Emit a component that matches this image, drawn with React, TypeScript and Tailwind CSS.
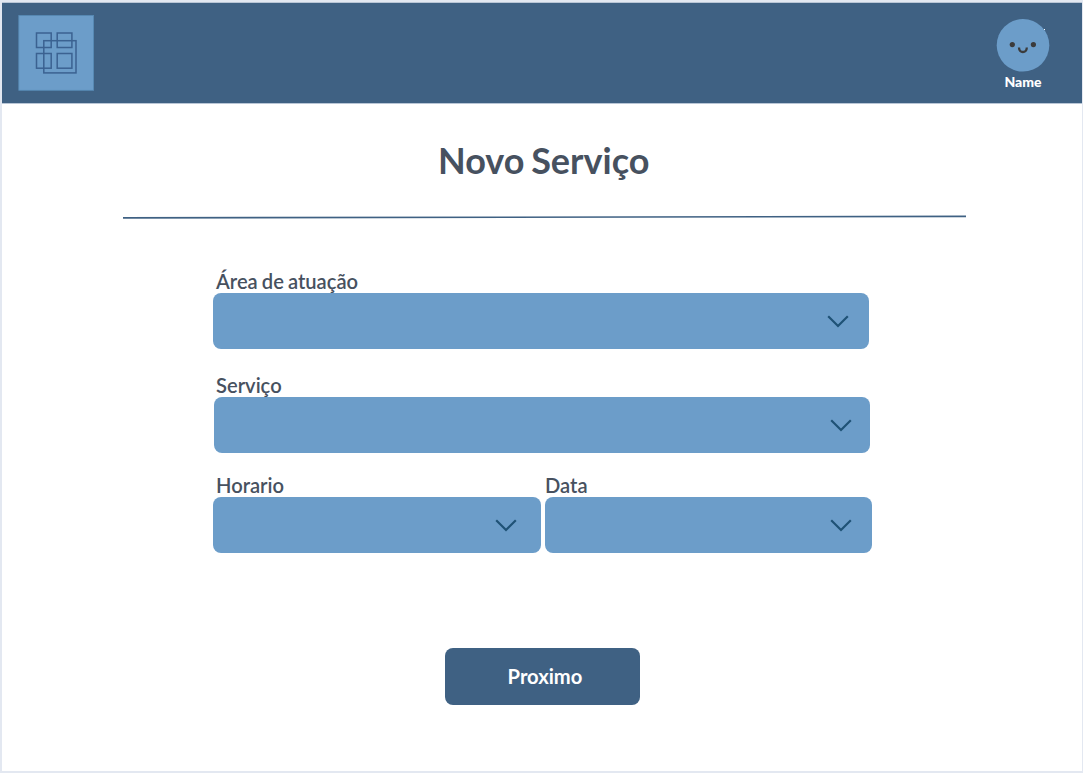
import React from "react";

function Chevron({ className = "" }: { className?: string }) {
  return (
    <svg className={`h-[13px] w-[22px] shrink-0 ${className}`} viewBox="0 0 22 13" fill="none">
      <path d="M1.2 1.2 L11 11 L20.8 1.2" stroke="#1f5276" strokeWidth="2.2" />
    </svg>
  );
}

function Field({ label, labelClass, boxClass }: { label: string; labelClass: string; boxClass: string }) {
  return (
    <label className="flex flex-col items-start">
      <span className={`h-6 text-[21px] leading-[23px] font-semibold whitespace-nowrap ${labelClass}`}>
        <span className="inline-block origin-left scale-x-[0.96] [word-spacing:-1px]">{label}</span>
      </span>
      <button
        type="button"
        aria-label={label}
        className={`flex h-14 items-center justify-end rounded-lg bg-[#6c9dc9] ${boxClass}`}
      >
        <Chevron />
      </button>
    </label>
  );
}

function Logo() {
  return (
    <svg className="ml-4 h-[76px] w-[76px]" viewBox="18 15 76 76" fill="none">
      <rect x="18.8" y="15.5" width="74.8" height="74.8" fill="#6c9dc9" stroke="#578ab5" strokeWidth="0.8" />
      <g stroke="#3b6291" strokeWidth="1.5">
        <rect x="36.5" y="33" width="14.7" height="14.5" />
        <rect x="57.2" y="33" width="14.7" height="14.5" />
        <rect x="36.5" y="53.5" width="14.7" height="14.7" />
        <rect x="57.2" y="53.5" width="14.7" height="14.7" />
        <rect x="43.8" y="40.7" width="32.2" height="32.2" />
      </g>
    </svg>
  );
}

function Avatar() {
  return (
    <svg className="h-[54px] w-[54px]" viewBox="996 18 54 54" fill="none">
      <circle cx="1023" cy="45.3" r="26.3" fill="#6c9dc9" />
      <circle cx="1012.3" cy="44.6" r="2.6" fill="#3b3b3b" />
      <circle cx="1033.4" cy="44.6" r="2.6" fill="#3b3b3b" />
      <path d="M1019 47.5 C1019 53.5 1026.8 53.5 1026.8 47.5" stroke="#3b3b3b" strokeWidth="2.3" />
      <rect x="1044" y="29" width="1" height="1" fill="#fff" />
    </svg>
  );
}

export default function App() {
  return (
    <div className="h-[773px] w-[1083px] overflow-hidden bg-[#e3e8f1] pt-0.5 pr-px pb-0.5 pl-0.5 font-['Lato',sans-serif] text-[#47515f]">
      <div className="flex h-[769px] flex-col bg-white">
        <header className="flex h-[102px] shrink-0 justify-between border-y border-[#b9c6d6] bg-[#3f6183] pt-3">
          <Logo />
          <div className="mt-[3px] mr-8 flex w-[54px] flex-col items-center">
            <Avatar />
            <span className="mt-px text-[14px] leading-[17px] font-black text-white">Name</span>
          </div>
        </header>

        <main className="flex flex-col">
          <h1 className="mt-[35px] ml-[436px] h-[43px] text-[36px] leading-[43px] font-bold whitespace-nowrap [word-spacing:-2px]">
            Novo Serviço
          </h1>
          <svg className="mt-8 ml-[121px] h-[6px] w-[843px]" viewBox="0 0 843 6">
            <path d="M0 3.9 L843 2.4" stroke="#3f6183" strokeWidth="1.6" />
          </svg>

          <form className="mt-[49px] ml-[211px] flex flex-col" onSubmit={(e) => e.preventDefault()}>
            <Field label="Área de atuação" labelClass="pl-[3px]" boxClass="w-[655.5px] pr-5" />
            <div className="mt-6">
              <Field label="Serviço" labelClass="pl-[3px]" boxClass="mt-[0.4px] ml-[1.4px] w-[655.6px] pt-px pr-[18px]" />
            </div>
            <div className="mt-[19.6px] flex gap-[4px]">
              <Field label="Horario" labelClass="pl-[3px]" boxClass="w-[327.6px] pt-[2px] pr-[23.5px]" />
              <Field label="Data" labelClass="" boxClass="w-[327.6px] pt-[2px] pr-5" />
            </div>
            <button
              type="submit"
              className="mt-[95px] ml-[231.5px] flex h-[57px] w-[195.5px] items-center justify-center rounded-lg bg-[#3f6183] pl-[5px] text-[21px] leading-6 font-bold text-white"
            >
              <span className="inline-block scale-x-[0.96]">Proximo</span>
            </button>
          </form>
        </main>
      </div>
    </div>
  );
}
